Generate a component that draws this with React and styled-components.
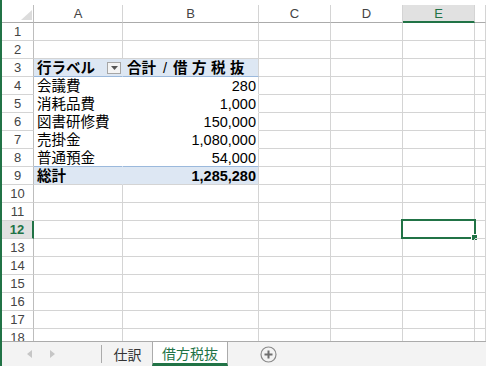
import React from 'react'
import styled, { createGlobalStyle, css } from 'styled-components'

const GlobalStyle = createGlobalStyle`
  html, body { margin: 0; padding: 0; background: #fff; }
  body { font-family: "Liberation Sans", "Noto Sans CJK JP", sans-serif; }
`

const GREEN = '#217346'
const GRID = '#d4d4d4'
const PIVOT = '#dde7f3'
const PIVOT_LINE = '#9bb9dc'

const Frame = styled.div`
  width: 486px;
  height: 366px;
  box-sizing: border-box;
  border-left: 2px solid ${GREEN};
  display: flex;
  flex-direction: column;
  overflow: hidden;
  background: #fff;
`

const TopGap = styled.div`
  height: 5px;
  flex: none;
`

const Sheet = styled.div`
  flex: 1;
  overflow: hidden;
  display: grid;
  grid-template-columns: 32px 89px 136px 72px 72px 72px 1fr;
  grid-auto-rows: 18px;
`

const Corner = styled.div`
  box-sizing: border-box;
  border-right: 1px solid #bdbdbd;
  border-bottom: 1px solid #ababab;
  display: flex;
  align-items: flex-end;
  justify-content: flex-end;
  padding: 0 1px 2px 0;
`

const ColHead = styled.div`
  box-sizing: border-box;
  border-right: 1px solid ${GRID};
  border-bottom: ${p => (p.$active ? `2px solid ${GREEN}` : '1px solid #ababab')};
  background: ${p => (p.$active ? '#e1e1e1' : '#fff')};
  color: ${p => (p.$active ? GREEN : '#444')};
  font-size: 13px;
  line-height: 17px;
  text-align: center;
`

const RowHead = styled.div`
  box-sizing: border-box;
  border-bottom: 1px solid ${GRID};
  border-right: ${p => (p.$active ? `2px solid ${GREEN}` : '1px solid #bdbdbd')};
  background: ${p => (p.$active ? '#e1e1e1' : '#fff')};
  color: ${p => (p.$active ? GREEN : '#444')};
  font-weight: ${p => (p.$active ? 'bold' : 'normal')};
  font-size: 13px;
  line-height: 18px;
  text-align: center;
`

const Cell = styled.div`
  position: relative;
  box-sizing: border-box;
  border-right: 1px solid ${GRID};
  border-bottom: 1px solid ${GRID};
  font-size: 14.5px;
  line-height: 18px;
  color: #000;
  padding: 0 2px 0 3px;
  white-space: nowrap;
  overflow: visible;
`

const PivotCell = styled(Cell)`
  background: ${p => (p.$head || p.$total ? PIVOT : '#fff')};
  font-weight: ${p => (p.$head || p.$total ? 'bold' : 'normal')};
  text-align: ${p => (p.$num ? 'right' : 'left')};
  border-right-color: ${p => (p.$left ? 'transparent' : GRID)};
  border-bottom: ${p => (p.$head || p.$last ? `1px solid ${PIVOT_LINE}` : p.$total ? `1px solid ${GRID}` : '1px solid transparent')};
  ${p =>
    p.$left &&
    css`
      display: flex;
      align-items: center;
      justify-content: space-between;
      padding-right: 1px;
    `}
`

const HeadTitle = styled.span`
  display: inline-flex;
  align-items: center;
  padding-left: 1px;
`

const Slash = styled.span`
  margin: 0 6px 0 7px;
  font-weight: normal;
`

const Spaced = styled.span`
  letter-spacing: 4.5px;
`

const FilterButton = styled.span`
  width: 14px;
  height: 12px;
  box-sizing: border-box;
  border: 1px solid #a6a6a6;
  background: #f4f4f4;
  display: flex;
  align-items: center;
  justify-content: center;
`

const Selection = styled.div`
  position: absolute;
  left: -2px;
  top: -2px;
  width: 75px;
  height: 20px;
  box-sizing: border-box;
  border: 2px solid ${GREEN};
  pointer-events: none;

  &::after {
    content: '';
    position: absolute;
    right: -4px;
    bottom: -4px;
    width: 5px;
    height: 5px;
    background: ${GREEN};
    border: 1px solid #fff;
  }
`

const TabBar = styled.div`
  flex: none;
  height: 25px;
  box-sizing: border-box;
  border-top: 1px solid #ababab;
  background: #f3f3f3;
  display: flex;
  align-items: stretch;
`

const Nav = styled.div`
  width: 99px;
  display: flex;
  align-items: center;
  padding-left: 25px;
  gap: 18px;
  box-sizing: border-box;
`

const Tab = styled.div`
  box-sizing: border-box;
  display: flex;
  align-items: center;
  justify-content: center;
  font-family: "Noto Sans CJK JP", sans-serif;
  font-size: 14px;
  ${p =>
    p.$active
      ? css`
          width: 76px;
          background: #fff;
          color: ${GREEN};
          border-left: 1px solid #ababab;
          border-right: 1px solid #ababab;
          border-bottom: 3px solid ${GREEN};
          margin-top: -1px;
          border-top: 1px solid #ababab;
          padding-top: 1px;
        `
      : css`
          width: 50px;
          color: #333;
          padding-left: 1px;
        `}
`

const TabSep = styled.div`
  width: 1px;
  margin: 3px 0 3px;
  background: #ababab;
`

const AddButton = styled.div`
  margin-left: 32px;
  display: flex;
  align-items: center;
`

const cols = ['A', 'B', 'C', 'D', 'E', '']

const pivotRows = [
  ['会議費', '280'],
  ['消耗品費', '1,000'],
  ['図書研修費', '150,000'],
  ['売掛金', '1,080,000'],
  ['普通預金', '54,000'],
]

function Arrow({ dir }) {
  return (
    <svg width="5" height="8" viewBox="0 0 5 8">
      {dir === 'left' ? <path d="M5 0 L0 4 L5 8 Z" fill="#c6c6c6" /> : <path d="M0 0 L5 4 L0 8 Z" fill="#c6c6c6" />}
    </svg>
  )
}

function EmptyCells({ from = 3, selected }) {
  return cols.slice(from - 1).map((c, i) => (
    <Cell key={i}>{selected && c === 'E' && <Selection />}</Cell>
  ))
}

export default function App() {
  const rows = []
  for (let r = 1; r <= 18; r++) {
    let content
    if (r === 3) {
      content = (
        <>
          <PivotCell $head $left>
            <span>行ラベル</span>
            <FilterButton>
              <svg width="7" height="4" viewBox="0 0 7 4">
                <path d="M0 0 H7 L3.5 4 Z" fill="#555" />
              </svg>
            </FilterButton>
          </PivotCell>
          <PivotCell $head>
            <HeadTitle>
              合計<Slash>/</Slash><Spaced>借方税抜</Spaced>
            </HeadTitle>
          </PivotCell>
          <EmptyCells />
        </>
      )
    } else if (r >= 4 && r <= 8) {
      const [label, value] = pivotRows[r - 4]
      content = (
        <>
          <PivotCell $left $last={r === 8}>{label}</PivotCell>
          <PivotCell $num $last={r === 8}>{value}</PivotCell>
          <EmptyCells />
        </>
      )
    } else if (r === 9) {
      content = (
        <>
          <PivotCell $total $left>総計</PivotCell>
          <PivotCell $total $num>1,285,280</PivotCell>
          <EmptyCells />
        </>
      )
    } else {
      content = <EmptyCells from={1} selected={r === 12} />
    }
    rows.push(
      <React.Fragment key={r}>
        <RowHead $active={r === 12}>{r}</RowHead>
        {content}
      </React.Fragment>
    )
  }

  return (
    <>
      <GlobalStyle />
      <Frame>
        <TopGap />
        <Sheet>
          <Corner>
            <svg width="11" height="10" viewBox="0 0 11 10">
              <path d="M11 0 V10 H0 Z" fill="#dcdcdc" />
            </svg>
          </Corner>
          {cols.map((c, i) => (
            <ColHead key={i} $active={c === 'E'}>{c}</ColHead>
          ))}
          {rows}
        </Sheet>
        <TabBar>
          <Nav>
            <Arrow dir="left" />
            <Arrow dir="right" />
          </Nav>
          <TabSep />
          <Tab>仕訳</Tab>
          <Tab $active>借方税抜</Tab>
          <AddButton>
            <svg width="17" height="17" viewBox="0 0 17 17">
              <circle cx="8.5" cy="8.5" r="7.5" fill="none" stroke="#8a8a8a" strokeWidth="1.2" />
              <path d="M8.5 4.5 V12.5 M4.5 8.5 H12.5" stroke="#6f6f6f" strokeWidth="2" />
            </svg>
          </AddButton>
        </TabBar>
      </Frame>
    </>
  )
}
